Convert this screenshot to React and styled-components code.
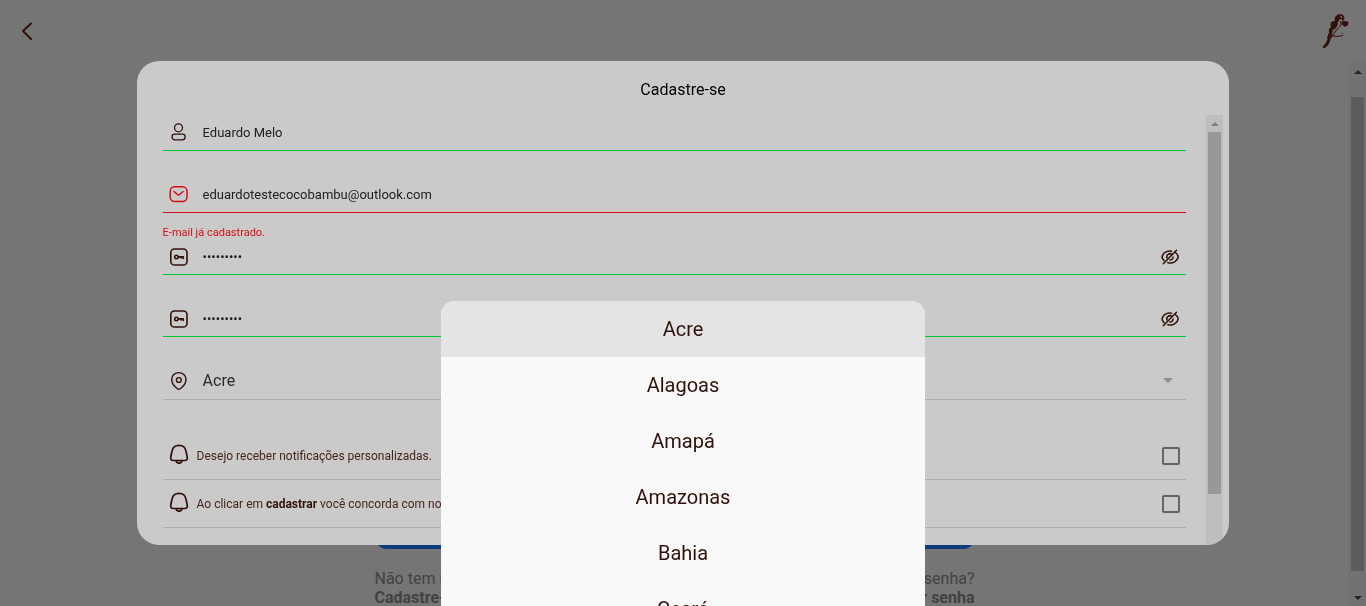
import React from "react";
import styled, { createGlobalStyle } from "styled-components";

const color = {
  page: "#757575",
  modal: "#cacaca",
  brown: "#32110b",
  ok: "#00c72e",
  error: "#d60f16",
  line: "#adadad",
};

const GlobalStyle = createGlobalStyle`
  *, *::before, *::after { box-sizing: border-box; }
  html, body, #root { height: 100%; }
  body {
    margin: 0;
    overflow: hidden;
    background: ${color.page};
    font-family: Roboto, "Liberation Sans", sans-serif;
  }
  button, input, select { font-family: inherit; }
`;

const Page = styled.div`
  display: flex;
  flex-direction: column;
  height: 100vh;
  overflow: hidden;
`;

const TopBar = styled.header`
  display: flex;
  align-items: center;
  justify-content: space-between;
  flex: none;
  height: 62px;
  padding: 0 16px 0 12px;
`;

const IconButton = styled.button`
  display: flex;
  align-items: center;
  justify-content: center;
  flex: none;
  width: ${(p) => p.$size}px;
  height: ${(p) => p.$size}px;
  padding: 0;
  border: 0;
  background: none;
  color: ${color.brown};
  cursor: pointer;
`;

const Body = styled.div`
  display: flex;
  flex: 1;
  min-height: 0;
`;

const LoginArea = styled.main`
  display: flex;
  flex: 1;
  flex-direction: column;
  align-items: center;
  justify-content: flex-end;
  overflow: hidden;
`;

const LoginPanel = styled.div`
  width: 600px;
  max-width: 100%;
  margin-bottom: -1px;
`;

const LoginButton = styled.button`
  display: block;
  width: 100%;
  height: 44px;
  margin-bottom: 20px;
  border: 0;
  border-radius: 12px;
  background: #0d3b7d;
  color: #8a8a8a;
  font-size: 16px;
`;

const LoginLinks = styled.div`
  display: flex;
  justify-content: space-between;
  color: #424242;
  font-size: 16px;
  line-height: 19px;
`;

const LoginLink = styled.a`
  color: inherit;
  text-align: ${(p) => p.$align};
  text-decoration: none;

  strong { display: block; }
`;

const Track = styled.div`
  display: flex;
  flex: none;
  flex-direction: column;
  align-items: center;
  width: 17px;
  background: ${(p) => p.$bg};
  color: ${(p) => p.$arrow};
`;

const TrackEnd = styled.span`
  display: flex;
  align-items: center;
  justify-content: center;
  flex: none;
  height: ${(p) => p.$height}px;
  padding-top: 2px;
`;

const Thumb = styled.div`
  flex: ${(p) => p.$grow};
  width: 13px;
  background: ${(p) => p.$bg};
`;

const TrackRest = styled.div`
  flex: ${(p) => p.$grow};
`;

const Overlay = styled.div`
  position: fixed;
  inset: 0;
  display: flex;
  align-items: ${(p) => p.$align};
  justify-content: center;
  pointer-events: none;

  > * { pointer-events: auto; }
`;

const Modal = styled.section`
  display: flex;
  flex-direction: column;
  width: 80%;
  height: 80%;
  padding: 0 6px;
  overflow: hidden;
  border-radius: 22px;
  background: ${color.modal};
`;

const ModalTitle = styled.h1`
  flex: none;
  margin: 0;
  padding: 19px 0 15px;
  color: #000;
  font-size: 16px;
  font-weight: 400;
  line-height: 20px;
  text-align: center;
`;

const ModalBody = styled.div`
  display: flex;
  flex: 1;
  min-height: 0;
`;

const Form = styled.form`
  flex: 1;
  min-width: 0;
  padding: 0 20px;
  overflow: hidden;
`;

const FieldBox = styled.div`
  display: flex;
  align-items: center;
  height: ${(p) => p.$height || 36}px;
  padding: 0 4px;
  border-bottom: 1px solid ${(p) => p.$line};
`;

const FieldIcon = styled.label`
  display: flex;
  justify-content: center;
  flex: none;
  width: 24px;
  color: ${(p) => p.$color};
`;

const TextInput = styled.input`
  flex: 1;
  min-width: 0;
  height: 32px;
  margin-left: 12px;
  padding: 0;
  border: 0;
  outline: 0;
  background: none;
  color: #212121;
  font-size: 13px;
`;

const SelectInput = styled.select`
  flex: 1;
  min-width: 0;
  height: 32px;
  margin-left: 12px;
  padding: 0;
  border: 0;
  outline: 0;
  appearance: none;
  background: none;
  color: #2b2b2b;
  font-size: 16px;
`;

const SelectArrow = styled.span`
  display: flex;
  width: 19px;
  color: #8e8e8e;
`;

const Hint = styled.p`
  height: 26px;
  margin: 0;
  padding-top: 13px;
  color: ${color.error};
  font-size: 11px;
  line-height: 13px;
`;

const Consents = styled.div`
  padding-top: 6px;
`;

const ConsentRow = styled.div`
  display: flex;
  align-items: center;
  height: 48px;
  padding: 2px 6px 0;
  border-bottom: 1px solid ${color.line};
  color: ${color.brown};
`;

const ConsentText = styled.label`
  flex: 1;
  min-width: 0;
  padding-left: 8px;
  overflow: hidden;
  color: #49241e;
  font-size: 12px;
  line-height: 16px;
  text-overflow: ellipsis;
  white-space: nowrap;

  strong { color: ${color.brown}; }
`;

const CheckBox = styled.input`
  flex: none;
  width: 18px;
  height: 18px;
  margin: 0;
  appearance: none;
  border: 2px solid #656565;
  border-radius: 2px;

  &:checked { background: #656565; }
`;

const Sheet = styled.div`
  width: 484px;
  max-width: 100%;
  height: 305px;
  overflow: hidden;
  border-radius: 14px 14px 0 0;
  background: #f9f9f9;
`;

const SheetOption = styled.button`
  display: block;
  width: 100%;
  height: 56px;
  padding: 0;
  border: 0;
  background: ${(p) => (p.$selected ? "#e4e4e4" : "transparent")};
  color: ${color.brown};
  font-size: 20px;
  text-align: center;
  cursor: pointer;
`;

function Icon({ size, width = size, children, stroke = 1.5, box = "0 0 20 20" }) {
  return (
    <svg
      width={width}
      height={size}
      viewBox={box}
      fill="none"
      stroke="currentColor"
      strokeWidth={stroke}
      strokeLinecap="round"
      strokeLinejoin="round"
      aria-hidden="true"
    >
      {children}
    </svg>
  );
}

const BackIcon = () => (
  <Icon size={30} box="0 0 30 30" stroke={2}>
    <path d="M19 7.500 11 15l8 8" />
  </Icon>
);

const UserIcon = () => (
  <Icon size={20} stroke={1.3}>
    <circle cx="9.500" cy="5.800" r="4" />
    <rect x="3" y="12.200" width="13.200" height="5.600" rx="2.800" />
  </Icon>
);

const MailIcon = () => (
  <Icon size={20}>
    <rect x="1.200" y="2.700" width="16.800" height="14.800" rx="4.500" />
    <path d="m5 7.500 3.200 2.800a2 2 0 0 0 2.700 0l3.200-2.800" />
  </Icon>
);

const KeyIcon = () => (
  <Icon size={20} stroke={1.6} box="0 -1 20 20">
    <rect x="1.800" y="2" width="16.200" height="16" rx="3.600" />
    <circle cx="7.400" cy="10" r="1.700" />
    <path d="M9.300 9.900h5v1.500M12.200 10.100v1" />
  </Icon>
);

const PinIcon = () => (
  <Icon size={20} stroke={1.4}>
    <path d="M2.700 8.300C2.700 4.200 5.900 1.600 9.800 1.600s7.200 2.600 7.200 6.700c0 3.700-3 7.400-5.800 9.500a2.300 2.300 0 0 1-2.800 0C5.600 15.700 2.700 12 2.700 8.300Z" />
    <circle cx="9.800" cy="9" r="2.400" />
  </Icon>
);

const BellIcon = () => (
  <Icon size={24} width={20} box="0 1 20 24" stroke={1.7}>
    <path d="M10 2.400c-4 0-6.500 2.400-7.100 6.100L1.800 14c-.4 2.100.4 3.500 2.200 3.500h12c1.800 0 2.600-1.400 2.200-3.500l-1.100-5.500C16.500 4.800 14 2.400 10 2.400Z" />
    <path d="M7 17.800c.4 1.500 1.500 2.300 3 2.300s2.600-.8 3-2.300" />
  </Icon>
);

const EyeOffIcon = () => (
  <Icon size={20} stroke={1.5} box="0 -1 20 20">
    <path d="M11.500 4.200C6.200 3.300 2.700 6.600 2 10c.3 1.400.9 2.600 2 3.600" />
    <path d="M14.800 5.200c2 1.100 3.100 2.800 3.400 4.800-.8 4.200-5.200 7.100-10.400 5.700" />
    <path d="M12 7.400A3.200 3.200 0 0 0 7 11M13.100 10a3 3 0 0 1-3.200 3" />
    <path d="M16.500 3.300 3.300 16.700" />
  </Icon>
);

function Triangle({ down, width = 8, height = 4 }) {
  return (
    <svg width={width} height={height} viewBox="0 0 8 4" fill="currentColor" aria-hidden="true">
      <path d={down ? "M0 0h8L4 4Z" : "M0 4h8L4 0Z"} />
    </svg>
  );
}

const ParrotLogo = () => (
  <svg width="29" height="39" viewBox="0 0 87 117" role="img" aria-label="Coco Bambu">
    <g fill={color.brown}>
      <path d="M41 22c0-9 8-15 17-15 8 0 13 6 12 14l-4 7c-2-6-6-8-10-7-1 6-4 10-9 10-4-1-6-5-6-9Z" />
      <path d="M31 31c6-6 17-5 20 1 0 9-7 17-14 21-8-4-11-15-6-22Z" />
      <path d="M61 30c6-4 14-4 21 0 1 8-3 14-10 14-7-1-11-7-11-14Z" />
      <path d="M26 48c4-3 9-2 10 2-2 8-3 15-2 22-2 5-5 8-7 14-2 8-7 15-12 20l-7 3-3-5 7-8c4-6 7-11 8-17-3-2-3-6 2-8-2-3-1-6 3-8-2-5-2-11 1-15Z" />
    </g>
    <path d="M58 27c4 9 0 16-6 22-7 8-13 14-17 24M34 71c9 3 22 3 32-1" fill="none" stroke={color.brown} strokeWidth="3" />
    <path d="M66 70c4-3 0-8-6-7M47 45c-2 7-6 11-11 17M43 71l-3 6" fill="none" stroke="#503a36" strokeWidth="2" />
    <path d="m57 11 5 1 3 6-6-1Z" fill="#7b706e" />
  </svg>
);

function Field({ id, label, icon, line, tone = color.brown, error, trailing, ...input }) {
  return (
    <div>
      <FieldBox $line={line}>
        <FieldIcon htmlFor={id} aria-label={label} $color={tone}>{icon}</FieldIcon>
        <TextInput id={id} aria-label={label} aria-invalid={Boolean(error)} {...input} />
        {trailing}
      </FieldBox>
      <Hint>{error}</Hint>
    </div>
  );
}

const ShowPassword = () => (
  <IconButton type="button" $size={24} aria-label="Mostrar senha">
    <EyeOffIcon />
  </IconButton>
);

function Consent({ id, children }) {
  return (
    <ConsentRow>
      <BellIcon />
      <ConsentText htmlFor={id}>{children}</ConsentText>
      <CheckBox id={id} type="checkbox" />
    </ConsentRow>
  );
}

const states = ["Acre", "Alagoas", "Amapá", "Amazonas", "Bahia", "Ceará"];

export default function App() {
  const [state, setState] = React.useState("Acre");

  return (
    <Page>
      <GlobalStyle />
      <TopBar>
        <IconButton type="button" $size={30} aria-label="Voltar">
          <BackIcon />
        </IconButton>
        <ParrotLogo />
      </TopBar>
      <Body>
        <LoginArea>
          <LoginPanel>
            <LoginButton type="button" aria-label="Entrar" />
            <LoginLinks>
              <LoginLink href="#cadastro" $align="left">
                Não tem uma conta?
                <strong>Cadastre-se</strong>
              </LoginLink>
              <LoginLink href="#senha" $align="right">
                Esqueceu a senha?
                <strong>Recuperar senha</strong>
              </LoginLink>
            </LoginLinks>
          </LoginPanel>
        </LoginArea>
        <Track $bg="#727272" $arrow="#252525" aria-hidden="true">
          <TrackEnd $height={18}><Triangle /></TrackEnd>
          <TrackRest $grow="0 0 17px" />
          <Thumb $grow={1} $bg="#5c5c5c" />
          <TrackRest $grow="0 0 17px" />
          <TrackEnd $height={18}><Triangle down /></TrackEnd>
        </Track>
      </Body>

      <Overlay $align="center">
        <Modal role="dialog" aria-labelledby="signup-title">
          <ModalTitle id="signup-title">Cadastre-se</ModalTitle>
          <ModalBody>
            <Form>
              <Field id="name" label="Nome" icon={<UserIcon />} line={color.ok} defaultValue="Eduardo Melo" />
              <Field
                id="email"
                label="E-mail"
                icon={<MailIcon />}
                line={color.error}
                tone={color.error}
                error="E-mail já cadastrado."
                defaultValue="eduardotestecocobambu@outlook.com"
              />
              <Field
                id="password"
                label="Senha"
                type="password"
                icon={<KeyIcon />}
                line={color.ok}
                defaultValue="123456789"
                trailing={<ShowPassword />}
              />
              <Field
                id="confirm"
                label="Confirmar senha"
                type="password"
                icon={<KeyIcon />}
                line={color.ok}
                defaultValue="123456789"
                trailing={<ShowPassword />}
              />
              <FieldBox $line={color.line} $height={37}>
                <FieldIcon htmlFor="state" aria-label="Estado" $color={color.brown}>
                  <PinIcon />
                </FieldIcon>
                <SelectInput
                  id="state"
                  aria-label="Estado"
                  value={state}
                  onChange={(e) => setState(e.target.value)}
                >
                  {states.map((s) => <option key={s}>{s}</option>)}
                </SelectInput>
                <SelectArrow><Triangle down width={10} height={5} /></SelectArrow>
              </FieldBox>
              <Hint />
              <Consents>
                <Consent id="notify">Desejo receber notificações personalizadas.</Consent>
                <Consent id="terms">
                  Ao clicar em <strong>cadastrar</strong> você concorda com nossos termos de uso.
                </Consent>
              </Consents>
            </Form>
            <Track $bg="#bebebe" $arrow="#808080" aria-hidden="true">
              <TrackEnd $height={17}><Triangle /></TrackEnd>
              <Thumb $grow={362} $bg="#989898" />
              <TrackRest $grow={51} />
            </Track>
          </ModalBody>
        </Modal>
      </Overlay>

      <Overlay $align="flex-end">
        <Sheet role="listbox" aria-label="Estado">
          {states.map((s) => (
            <SheetOption
              key={s}
              type="button"
              role="option"
              aria-selected={s === state}
              $selected={s === state}
              onClick={() => setState(s)}
            >
              {s}
            </SheetOption>
          ))}
        </Sheet>
      </Overlay>
    </Page>
  );
}
